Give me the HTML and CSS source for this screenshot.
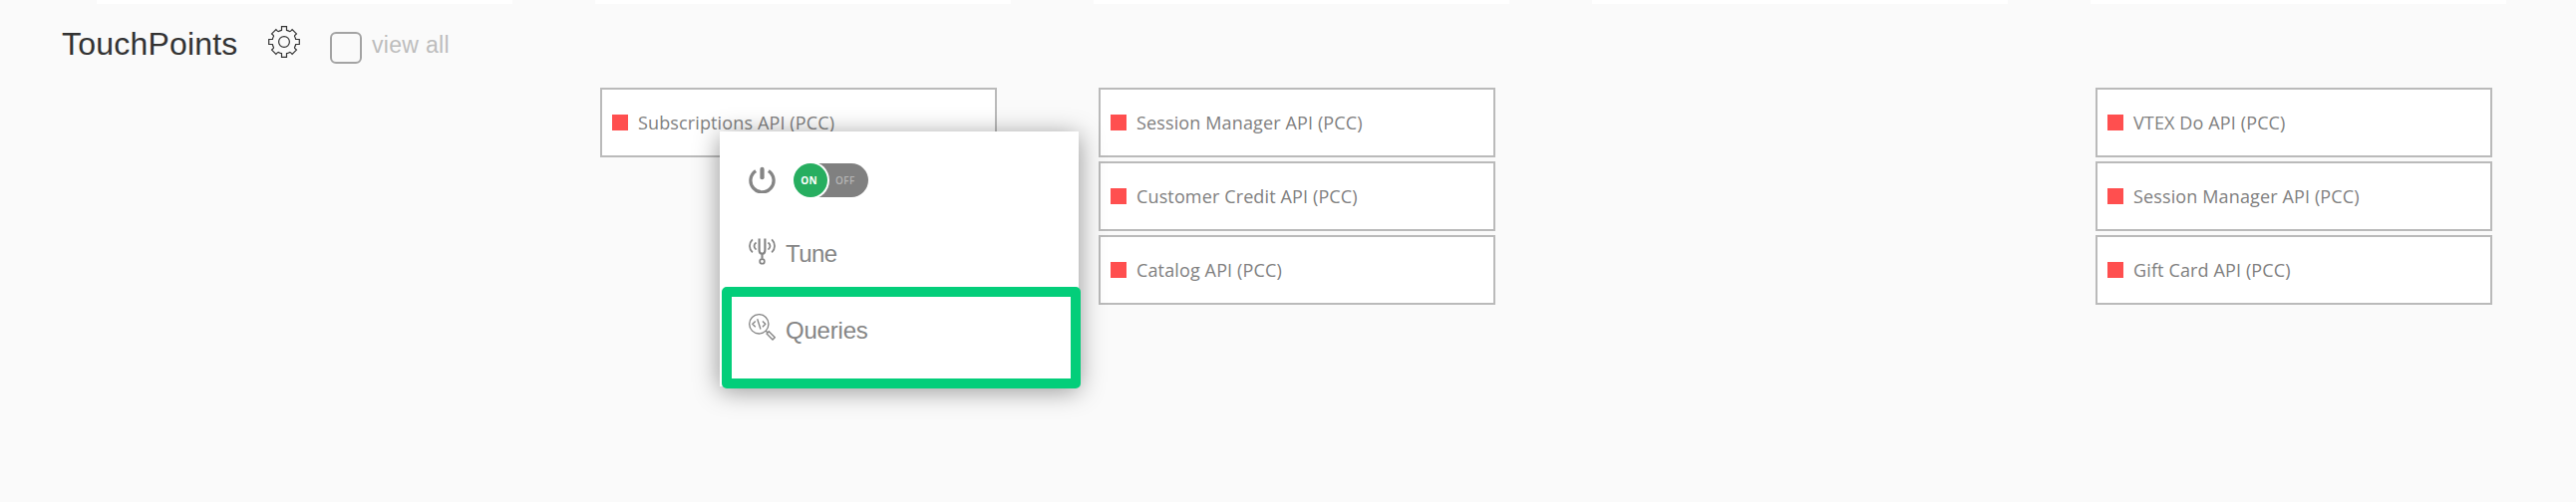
FILE: index.html
```html
<!DOCTYPE html>
<html lang="en">
<head>
<meta charset="utf-8">
<title>TouchPoints</title>
<link rel="stylesheet" href="styles.css">
</head>
<body>
<div class="panels"><i class="panel"></i><i class="panel"></i><i class="panel"></i><i class="panel"></i><i class="panel"></i></div>
<header class="header">
  <h1 class="title"><span>TouchPoints</span></h1>
  <svg class="gear" viewBox="0 0 32 32"><path d="M13.500.700h5v3.600q1.800.4 3 1.200l1-.2 1.600-1.700 4.300 4.300-1.700 1.600-.2 1q.8 1.200 1.200 3h3.600v5h-3.600q-.4 1.800-1.200 3l.2 1 1.700 1.600-4.300 4.300-1.600-1.700-1-.2q-1.200.8-3 1.200v3.600h-5v-3.600q-1.800-.4-3-1.200l-1 .2-1.600 1.700-4.300-4.300 1.700-1.600.2-1q-.8-1.200-1.200-3H.700v-5h3.600q.4-1.800 1.200-3l-.2-1-1.700-1.600 4.300-4.300 1.600 1.700 1 .2q1.200-.8 3-1.200z"/><circle cx="16" cy="16" r="5.400"/></svg>
  <label class="view"><span class="check"></span><span class="view-text">view all</span></label>
</header>
<main class="columns">
  <section class="column">
    <div class="card"><i class="status"></i><span>Subscriptions API (PCC)</span></div>
    <div class="menu">
      <div class="item power">
        <svg class="icon" viewBox="0 0 28 28"><path d="M7.400 4.800A12 12 0 1 0 20.600 4.800" stroke-width="3.400"/><path d="M14 3v8.600" stroke-width="4.400" stroke-linecap="round"/></svg>
        <div class="toggle"><span class="on">ON</span><span class="off">OFF</span></div>
      </div>
      <div class="item tune">
        <svg class="icon" viewBox="0 0 28 28"><path d="M11 .5v12q0 4 3 4t3-4V.5M14 16.500v5" stroke-width="2.200"/><circle cx="14" cy="24.300" r="2.400" stroke-width="1.800"/><path d="M4 1.500Q1 4.500 1 8.300T4 15M24 1.500Q27 4.500 27 8.300T24 15M7.800 4.600Q5.700 6.200 5.700 8.300T7.800 12M20.200 4.600Q22.300 6.200 22.300 8.300T20.200 12" stroke-width="1.800"/></svg>
        <span class="label">Tune</span>
      </div>
      <div class="item queries">
        <svg class="icon" viewBox="0 0 28 28" stroke-width="1.400"><circle cx="10.700" cy="10.700" r="10"/><path d="M7 7.700 4 10.700l3 3M14.400 7.700l3 3-3 3M9 5.400l3.400 10.600M17.700 17.700l2 2M18.700 20.700l2.300-2.300 6.200 6.200-2.300 2.400z"/></svg>
        <span class="label">Queries</span>
      </div>
    </div>
  </section>
  <section class="column">
    <div class="card"><i class="status"></i><span>Session Manager API (PCC)</span></div>
    <div class="card"><i class="status"></i><span>Customer Credit API (PCC)</span></div>
    <div class="card"><i class="status"></i><span>Catalog API (PCC)</span></div>
  </section>
  <section class="column"></section>
  <section class="column">
    <div class="card"><i class="status"></i><span>VTEX Do API (PCC)</span></div>
    <div class="card"><i class="status"></i><span>Session Manager API (PCC)</span></div>
    <div class="card"><i class="status"></i><span>Gift Card API (PCC)</span></div>
  </section>
</main>
</body>
</html>
```
FILE: styles.css
```css
* { box-sizing: border-box; }
body { margin: 0; height: 504px; overflow: hidden; background: #fafafa; font-family: "Liberation Sans", Arial, sans-serif; }
.panels { display: flex; gap: 83px; padding-left: 97px; height: 4px; }
.panel { flex: 0 0 417px; background: #fff; }
.header { display: flex; align-items: flex-start; height: 84px; padding: 22px 0 0 62px; }
.title { margin: 0; width: 207px; font-size: 32px; line-height: 36px; font-weight: 400; color: #333; letter-spacing: .2px; }
.gear { width: 32px; height: 32px; fill: none; stroke: #333; stroke-width: 1.2; }
.view { display: flex; margin: 6px 0 0 30px; color: #bdbdbd; }
.check { width: 32px; height: 32px; border: 2px solid #a3a3a3; border-radius: 6px; }
.view-text { margin: -1px 0 0 10px; font-size: 23px; line-height: 28px; letter-spacing: .3px; }
.columns { display: grid; grid-template-columns: repeat(4, 398px); column-gap: 102px; padding-left: 602px; }
.column { position: relative; display: flex; flex-direction: column; gap: 4px; }
.card { display: flex; align-items: center; height: 70px; padding-left: 10px; border: 2px solid #bababa; background: #fff; color: #808080; font: 18px/26px "Open Sans", sans-serif; letter-spacing: .13px; white-space: nowrap; }
.status { width: 16px; height: 16px; margin-right: 10px; background: #ff4f4f; }
.menu { position: absolute; z-index: 2; left: 120px; top: 44px; width: 360px; height: 256px; background: #fff; box-shadow: 0 4px 24px rgba(0,0,0,.42); color: #858585; }
.item { display: flex; align-items: flex-start; padding-left: 29px; }
.icon { width: 27px; height: 27px; flex: none; fill: none; stroke: #858585; }
.power { height: 107px; padding-top: 35px; }
.toggle { display: flex; align-items: center; width: 75px; height: 34px; margin: -3px 0 0 18px; border-radius: 17px; background: #808080; font: 10px/14px "Open Sans", sans-serif; }
.on { width: 34px; height: 34px; border-radius: 50%; background: #27ae60; color: #fff; box-shadow: 0 0 0 2px #fff; text-align: center; line-height: 34px; font-weight: 700; padding-right: 3px; letter-spacing: .3px; }
.off { margin-left: 8px; color: #b5b5b5; font-weight: 600; letter-spacing: .4px; }
.tune { height: 49px; }
.label { margin-left: 10px; font-size: 24px; line-height: 28px; letter-spacing: -.2px; }
.tune .label { margin-top: 2px; letter-spacing: -.6px; }
.queries { width: 360px; height: 102px; margin-left: 2px; padding: 17px 0 0 17px; border: 10px solid #03ce7a; border-radius: 5px; }
.queries .label { margin-top: 3px; }
```
